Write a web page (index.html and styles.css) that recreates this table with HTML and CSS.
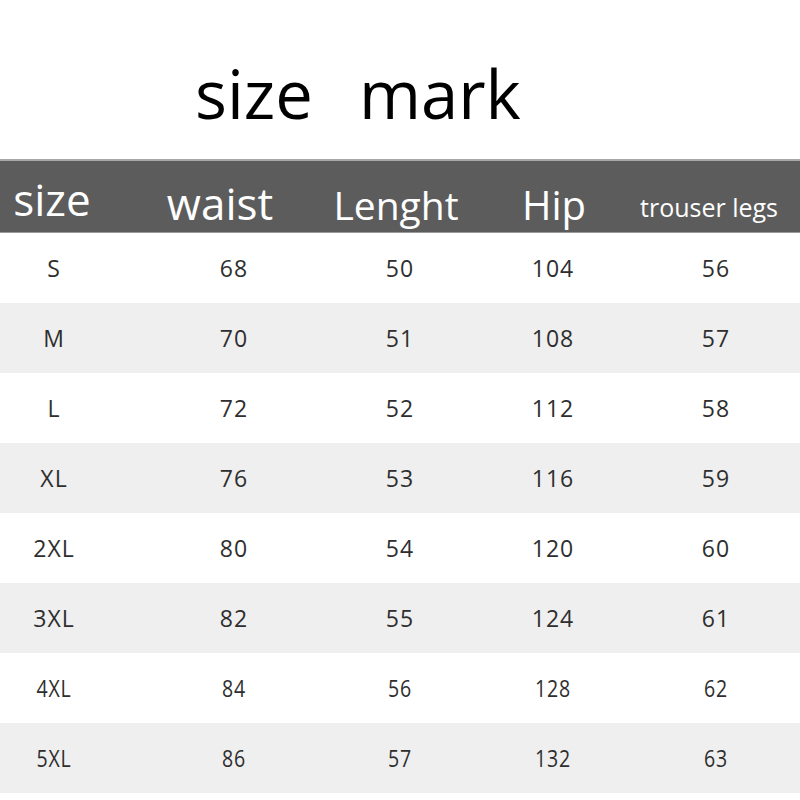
FILE: index.html
```html
<!DOCTYPE html>
<html>
<head>
<meta charset="utf-8">
<link rel="stylesheet" href="styles.css">
</head>
<body>
<div class="page">
  <h1 class="title"><span>size</span><span>mark</span></h1>
  <div class="head">
    <div class="hc h-size">size</div>
    <div class="hc h-waist">waist</div>
    <div class="hc h-len">Lenght</div>
    <div class="hc h-hip">Hip</div>
    <div class="hc h-leg">trouser legs</div>
  </div>
  <div class="rows">
    <div class="row"><div class="c">S</div><div class="c">68</div><div class="c">50</div><div class="c">104</div><div class="c">56</div></div>
    <div class="row alt"><div class="c">M</div><div class="c">70</div><div class="c">51</div><div class="c">108</div><div class="c">57</div></div>
    <div class="row"><div class="c">L</div><div class="c">72</div><div class="c">52</div><div class="c">112</div><div class="c">58</div></div>
    <div class="row alt"><div class="c">XL</div><div class="c">76</div><div class="c">53</div><div class="c">116</div><div class="c">59</div></div>
    <div class="row"><div class="c">2XL</div><div class="c">80</div><div class="c">54</div><div class="c">120</div><div class="c">60</div></div>
    <div class="row alt"><div class="c">3XL</div><div class="c">82</div><div class="c">55</div><div class="c">124</div><div class="c">61</div></div>
    <div class="row narrow"><div class="c">4XL</div><div class="c">84</div><div class="c">56</div><div class="c">128</div><div class="c">62</div></div>
    <div class="row alt narrow"><div class="c">5XL</div><div class="c">86</div><div class="c">57</div><div class="c">132</div><div class="c">63</div></div>
  </div>
</div>
</body>
</html>
```

FILE: styles.css
```css
html, body {
  margin: 0;
  padding: 0;
  background: #ffffff;
}
.page {
  width: 800px;
  height: 800px;
  overflow: hidden;
  font-family: "Open Sans", "Noto Sans", sans-serif;
}
.title {
  margin: 0;
  height: 159px;
  box-sizing: border-box;
  padding-top: 48px;
  padding-left: 195px;
  display: flex;
  gap: 46px;
  font-size: 67px;
  font-weight: 400;
  line-height: 90px;
  color: #000;
}
.head {
  height: 74px;
  box-sizing: border-box;
  background: #5c5c5c;
  border-top: 2px solid #a8a8a8;
  border-bottom: 1px solid #9a9a9a;
  display: grid;
  grid-template-columns: 104px 232px 120px 196px 114px 34px;
  color: #fff;
}
.hc {
  display: flex;
  justify-content: center;
  align-items: center;
  white-space: nowrap;
  line-height: 1;
}
.h-size { font-size: 44px; padding-top: 4px; }
.h-waist { font-size: 44px; padding-top: 12px; }
.h-len { font-size: 39px; padding-top: 16px; }
.h-hip { font-size: 40px; padding-top: 16px; }
.h-leg { font-size: 25px; padding-top: 22px; }
.row {
  height: 70px;
  display: grid;
  grid-template-columns: 108px 252px 80px 226px 100px 34px;
  background: #ffffff;
  color: #2e2e2e;
  font-size: 23px;
  letter-spacing: 1px;
}
.row.alt {
  background: #efefef;
}
.c {
  display: flex;
  justify-content: center;
  align-items: center;
  white-space: nowrap;
}
.row.narrow .c {
  transform: scaleX(0.85);
}
```
